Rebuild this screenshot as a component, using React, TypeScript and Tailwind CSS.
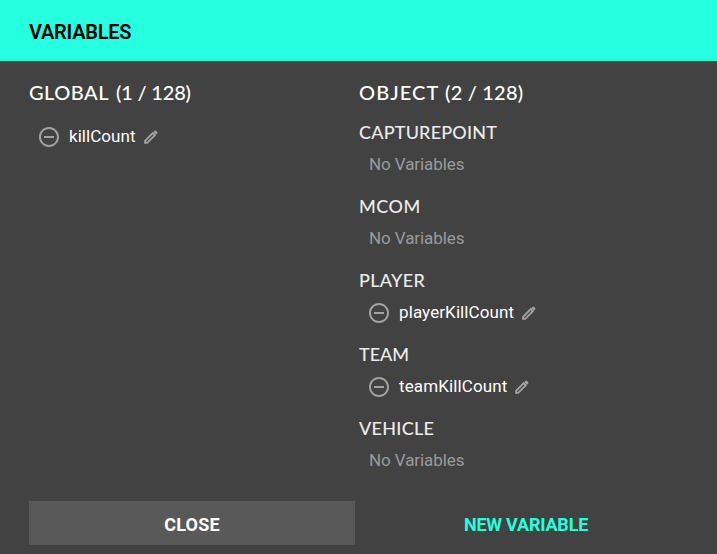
import type { ReactNode } from 'react';
import { MdRemoveCircleOutline } from 'react-icons/md';

function PencilIcon() {
  return (
    <svg viewBox="0 0 14 14" className="size-3.5" fill="none" stroke="currentColor" strokeWidth="1.9" aria-hidden="true">
      <path d="M1.1 12.9V10.8L8.7 3.2L10.8 5.3L3.2 12.9Z" />
      <path d="M9.3 2.1L10.7 0.7Q11.2 0.2 11.8 0.7L13.3 2.2Q13.8 2.8 13.3 3.3L11.9 4.7Z" fill="currentColor" stroke="none" />
    </svg>
  );
}

function Variable({ name, spacing }: { name: string; spacing: string }) {
  return (
    <div className="flex h-6 items-center pl-2 text-white">
      <button type="button" aria-label={`Remove ${name}`} className="text-[#a3a3a3]">
        <MdRemoveCircleOutline className="size-6" />
      </button>
      <span className={`mb-0.5 ml-2 text-[17px] leading-6 ${spacing}`}>{name}</span>
      <button type="button" aria-label={`Edit ${name}`} className="ml-2 text-[#a3a3a3]">
        <PencilIcon />
      </button>
    </div>
  );
}

function Group({ title, spacing, children }: { title: string; spacing: string; children?: ReactNode }) {
  return (
    <section className="h-[74px]">
      <h3 className={`mb-[9px] font-['Lato',sans-serif] text-[18px] leading-6 font-medium text-[#ececec] ${spacing}`}>{title}</h3>
      {children ?? <p className="-mt-px pl-2.5 text-[17px] leading-6 tracking-[-0.08px] text-[#9b9b9b]">No Variables</p>}
    </section>
  );
}

export default function App() {
  return (
    <div className="flex h-[554px] w-[717px] flex-col overflow-hidden bg-[#424242] font-['Roboto',sans-serif]">
      <header className="flex h-[61px] shrink-0 items-center bg-[#26ffdf] px-[29px] pt-[3px] text-black">
        <h1 className="text-[20px] leading-6 font-semibold tracking-[-0.25px]">VARIABLES</h1>
      </header>
      <main className="grid h-[440px] shrink-0 grid-cols-[330px_1fr] pt-[19px] pl-[29px] whitespace-nowrap">
        <section>
          <h2 className="mb-[21px] font-['Lato',sans-serif] text-[20px] leading-6 font-medium tracking-[0.5px] text-white">
            GLOBAL <span className="ml-[2px] tracking-[-0.17px]">(1 / 128)</span>
          </h2>
          <Variable name="killCount" spacing="tracking-[0.05px]" />
        </section>
        <section>
          <h2 className="mb-4 font-['Lato',sans-serif] text-[20px] leading-6 font-medium tracking-[1.12px] text-white">
            OBJECT <span className="tracking-[0.2px]">(2 / 128)</span>
          </h2>
          <Group title="CAPTUREPOINT" spacing="tracking-[0.2px]" />
          <Group title="MCOM" spacing="tracking-[0.5px]" />
          <Group title="PLAYER" spacing="tracking-[0.3px]">
            <Variable name="playerKillCount" spacing="tracking-[0.1px]" />
          </Group>
          <Group title="TEAM" spacing="tracking-[0px]">
            <Variable name="teamKillCount" spacing="tracking-[0.12px]" />
          </Group>
          <Group title="VEHICLE" spacing="tracking-[0.3px]" />
        </section>
      </main>
      <footer className="flex h-11 gap-2 pl-[29px] text-[18px] font-bold">
        <button type="button" className="w-[326px] bg-[#595959] pt-0.5 tracking-[0.2px] text-white">CLOSE</button>
        <button type="button" className="w-[326px] pt-0.5 tracking-[-0.2px] text-[#26ffdf]">NEW VARIABLE</button>
      </footer>
    </div>
  );
}
